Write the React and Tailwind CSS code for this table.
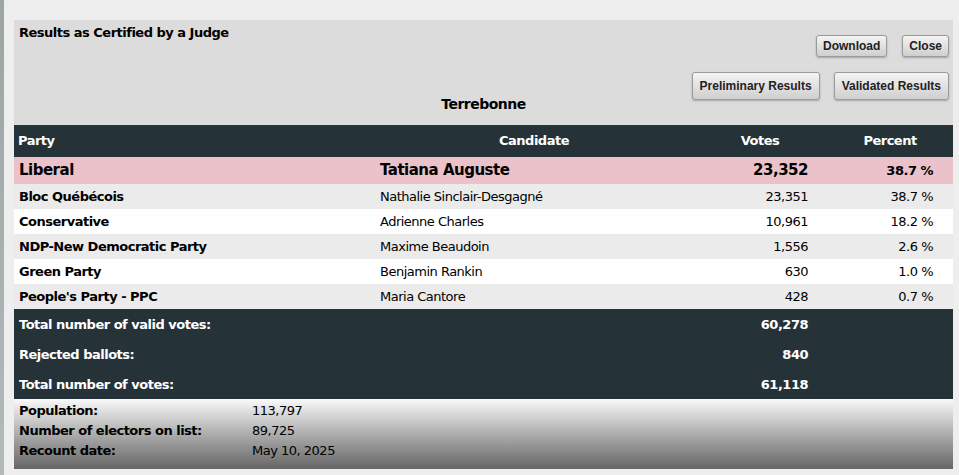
import React from "react";

const font = { fontFamily: '"DejaVu Sans", Verdana, sans-serif' };

const rows = [
  { party: "Bloc Québécois", cand: "Nathalie Sinclair-Desgagné", votes: "23,351", pct: "38.7 %", bg: "bg-[#ebebeb]" },
  { party: "Conservative", cand: "Adrienne Charles", votes: "10,961", pct: "18.2 %", bg: "bg-white" },
  { party: "NDP-New Democratic Party", cand: "Maxime Beaudoin", votes: "1,556", pct: "2.6 %", bg: "bg-[#ebebeb]" },
  { party: "Green Party", cand: "Benjamin Rankin", votes: "630", pct: "1.0 %", bg: "bg-white" },
  { party: "People's Party - PPC", cand: "Maria Cantore", votes: "428", pct: "0.7 %", bg: "bg-[#ebebeb]" },
];

const cols = "grid grid-cols-[361px_318px_134px_126px]";

function Btn({ children, big }) {
  return (
    <button
      className={
        "rounded-[3px] border border-[#9a9a9a] bg-gradient-to-b from-[#f4f4f4] to-[#cfcfcf] text-[12px] font-bold text-[#222] shadow-[0_1px_2px_rgba(0,0,0,0.25)] " +
        (big ? "h-[28px] px-[7px]" : "h-[22px] px-[6px]")
      }
      style={{ fontFamily: '"Liberation Sans", Arial, sans-serif' }}
    >
      {children}
    </button>
  );
}

export default function App() {
  return (
    <div className="flex h-[475px] w-[959px] overflow-hidden bg-[#eeeeee] text-black" style={font}>
      <div className="w-[4px] bg-gradient-to-b from-[#9ea3a6] to-[#b4b9bc]" />
      <div className="pl-[10px] pt-[20px]">
        <div className="w-[939px] bg-[#dcdcdc]">
          {/* header area */}
          <div className="flex h-[105px] flex-col">
            <div className="flex items-start justify-between pl-[5px] pr-[4px] pt-[5px]">
              <div className="text-[13px] font-bold leading-[16px] tracking-[-0.5px]">Results as Certified by a Judge</div>
              <div className="mt-[10px] flex gap-[15px]">
                <Btn>Download</Btn>
                <Btn>Close</Btn>
              </div>
            </div>
            <div className="mt-[15px] grid flex-1 grid-cols-[1fr_auto_1fr]">
              <div />
              <div className="self-end pb-[12px] text-[14px] font-bold leading-[17px] tracking-[-0.5px]">Terrebonne</div>
              <div className="flex justify-end gap-[14px] self-start pr-[4px]">
                <Btn big>Preliminary Results</Btn>
                <Btn big>Validated Results</Btn>
              </div>
            </div>
          </div>
          {/* table header */}
          <div className={cols + " h-[32px] items-center bg-[#253238] text-[13px] font-bold tracking-[-0.5px] text-white"}>
            <div className="pl-[4px]">Party</div>
            <div className="text-center">Candidate</div>
            <div className="text-center">Votes</div>
            <div className="text-center">Percent</div>
          </div>
          {/* winner */}
          <div className={cols + " h-[27px] items-center bg-[#ebc1ca] text-[15px] font-bold tracking-[-0.5px]"}>
            <div className="pl-[5px]">Liberal</div>
            <div className="pl-[5px]">Tatiana Auguste</div>
            <div className="pr-[19px] text-right">23,352</div>
            <div className="pr-[20px] text-right text-[13px]">38.7 %</div>
          </div>
          {rows.map((r) => (
            <div key={r.party} className={cols + " h-[25px] items-center text-[13px] tracking-[-0.5px] " + r.bg}>
              <div className="pl-[5px] font-bold">{r.party}</div>
              <div className="pl-[5px]">{r.cand}</div>
              <div className="pr-[19px] text-right">{r.votes}</div>
              <div className="pr-[20px] text-right">{r.pct}</div>
            </div>
          ))}
          {/* totals */}
          <div className="bg-[#253238] text-[13px] font-bold tracking-[-0.5px] text-white">
            {[
              ["Total number of valid votes:", "60,278"],
              ["Rejected ballots:", "840"],
              ["Total number of votes:", "61,118"],
            ].map(([l, v]) => (
              <div key={l} className={cols + " h-[30px] items-center pt-[2px]"}>
                <div className="col-span-2 pl-[5px]">{l}</div>
                <div className="pr-[19px] text-right">{v}</div>
                <div />
              </div>
            ))}
          </div>
          {/* footer */}
          <div className="h-[70px] bg-gradient-to-b from-[#fafafa] to-[#666666] pt-[2px] text-[13px] tracking-[-0.5px]">
            {[
              ["Population:", "113,797"],
              ["Number of electors on list:", "89,725"],
              ["Recount date:", "May 10, 2025"],
            ].map(([l, v]) => (
              <div key={l} className="flex h-[20px] items-center">
                <div className="w-[238px] pl-[5px] font-bold">{l}</div>
                <div>{v}</div>
              </div>
            ))}
          </div>
        </div>
      </div>
    </div>
  );
}
